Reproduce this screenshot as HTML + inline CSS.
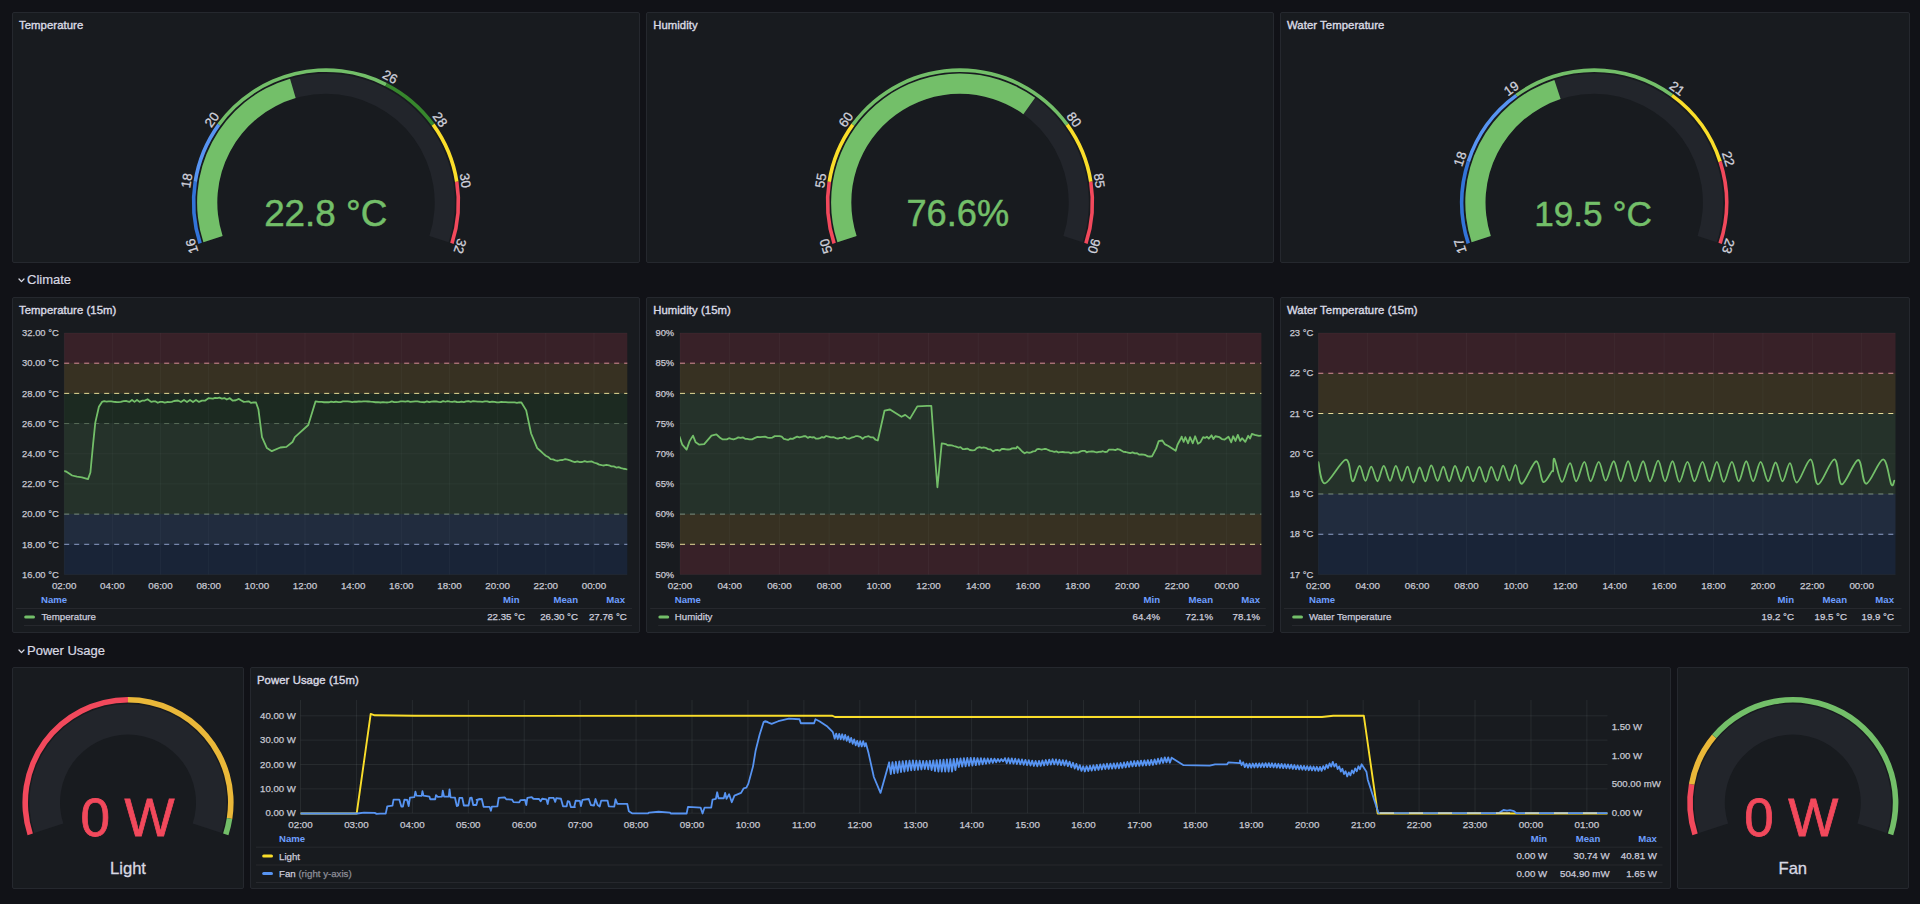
<!DOCTYPE html><html><head><meta charset="utf-8"><style>
*{margin:0;padding:0;box-sizing:border-box}
html,body{width:1920px;height:904px;overflow:hidden;background:#111217;font-family:"Liberation Sans", sans-serif;color:#ccccdc}
.panel{position:absolute;background:#181b1f;border:1px solid #25282e;border-radius:2px}
.ptitle{position:absolute;letter-spacing:0.08px;font-size:11.3px;line-height:15px;-webkit-text-stroke:0.4px #d8d9e3;color:#d8d9e3;white-space:nowrap}
.row{position:absolute;font-size:13px;line-height:16px;-webkit-text-stroke:0.2px #d8d9e3;color:#d8d9e3;white-space:nowrap}
svg{position:absolute;left:0;top:0}
svg text{font-family:"Liberation Sans", sans-serif}
</style></head><body><div class="panel" style="left:12px;top:12px;width:628px;height:251px"></div><div class="ptitle" style="left:19px;top:18px">Temperature</div><div class="panel" style="left:646.2px;top:12px;width:627.6px;height:251px"></div><div class="ptitle" style="left:653.2px;top:18px">Humidity</div><div class="panel" style="left:1280px;top:12px;width:629.5px;height:251px"></div><div class="ptitle" style="left:1287px;top:18px">Water Temperature</div><div class="row" style="left:27px;top:272px">Climate</div><svg style="left:18px;top:278px" width="7" height="5" viewBox="0 0 7 5"><path d="M1,1 L3.5,3.6 L6,1" fill="none" stroke="#d8d9e3" stroke-width="1.3" stroke-linecap="round" stroke-linejoin="round"/></svg><div class="panel" style="left:12px;top:296.5px;width:628px;height:336px"></div><div class="ptitle" style="left:19px;top:302.5px">Temperature (15m)</div><div class="panel" style="left:646.2px;top:296.5px;width:627.6px;height:336px"></div><div class="ptitle" style="left:653.2px;top:302.5px">Humidity (15m)</div><div class="panel" style="left:1280px;top:296.5px;width:629.5px;height:336px"></div><div class="ptitle" style="left:1287px;top:302.5px">Water Temperature (15m)</div><div class="row" style="left:27px;top:643px">Power Usage</div><svg style="left:18px;top:648.5px" width="7" height="5" viewBox="0 0 7 5"><path d="M1,1 L3.5,3.6 L6,1" fill="none" stroke="#d8d9e3" stroke-width="1.3" stroke-linecap="round" stroke-linejoin="round"/></svg><div class="panel" style="left:12px;top:667.4px;width:232px;height:221.6px"></div><div class="panel" style="left:250px;top:667.4px;width:1420.7px;height:221.6px"></div><div class="ptitle" style="left:257px;top:673.4px">Power Usage (15m)</div><div class="panel" style="left:1676.7px;top:667.4px;width:232.8px;height:221.6px"></div><svg width="1920" height="904" viewBox="0 0 1920 904"><path d="M203.41,242.33A128.90,128.90 0 1 1 448.59,242.33L429.38,236.09A108.70,108.70 0 1 0 222.62,236.09Z" fill="#22252b"/><path d="M203.41,242.33A128.90,128.90 0 0 1 290.04,78.72L295.67,98.12A108.70,108.70 0 0 0 222.62,236.09Z" fill="#73BF69"/><path d="M198.37,243.97A134.20,134.20 0 0 1 193.45,181.51L197.01,182.07A130.60,130.60 0 0 0 201.79,242.86Z" fill="#3274D9"/><path d="M193.45,181.51A134.20,134.20 0 0 1 217.43,123.62L220.34,125.74A130.60,130.60 0 0 0 197.01,182.07Z" fill="#5794F2"/><path d="M217.43,123.62A134.20,134.20 0 0 1 386.93,82.93L385.29,86.13A130.60,130.60 0 0 0 220.34,125.74Z" fill="#73BF69"/><path d="M386.93,82.93A134.20,134.20 0 0 1 434.57,123.62L431.66,125.74A130.60,130.60 0 0 0 385.29,86.13Z" fill="#37872D"/><path d="M434.57,123.62A134.20,134.20 0 0 1 458.55,181.51L454.99,182.07A130.60,130.60 0 0 0 431.66,125.74Z" fill="#FADE2A"/><path d="M458.55,181.51A134.20,134.20 0 0 1 453.63,243.97L450.21,242.86A130.60,130.60 0 0 0 454.99,182.07Z" fill="#F2495C"/><text x="0" y="0" transform="translate(191.90,246.07) rotate(252.00)" text-anchor="middle" dominant-baseline="central" font-size="13.2" fill="#d0d1dc" stroke="#d0d1dc" stroke-width="0.3">16</text><text x="0" y="0" transform="translate(186.74,180.44) rotate(279.00)" text-anchor="middle" dominant-baseline="central" font-size="13.2" fill="#d0d1dc" stroke="#d0d1dc" stroke-width="0.3">18</text><text x="0" y="0" transform="translate(211.93,119.62) rotate(306.00)" text-anchor="middle" dominant-baseline="central" font-size="13.2" fill="#d0d1dc" stroke="#d0d1dc" stroke-width="0.3">20</text><text x="0" y="0" transform="translate(390.01,76.87) rotate(387.00)" text-anchor="middle" dominant-baseline="central" font-size="13.2" fill="#d0d1dc" stroke="#d0d1dc" stroke-width="0.3">26</text><text x="0" y="0" transform="translate(440.07,119.62) rotate(414.00)" text-anchor="middle" dominant-baseline="central" font-size="13.2" fill="#d0d1dc" stroke="#d0d1dc" stroke-width="0.3">28</text><text x="0" y="0" transform="translate(465.26,180.44) rotate(441.00)" text-anchor="middle" dominant-baseline="central" font-size="13.2" fill="#d0d1dc" stroke="#d0d1dc" stroke-width="0.3">30</text><text x="0" y="0" transform="translate(460.10,246.07) rotate(468.00)" text-anchor="middle" dominant-baseline="central" font-size="13.2" fill="#d0d1dc" stroke="#d0d1dc" stroke-width="0.3">32</text><text x="325.7" y="225.7" text-anchor="middle" font-size="36.8" fill="#73BF69" stroke="#73BF69" stroke-width="0.5">22.8 °C</text><path d="M837.41,242.33A128.90,128.90 0 1 1 1082.59,242.33L1063.38,236.09A108.70,108.70 0 1 0 856.62,236.09Z" fill="#22252b"/><path d="M837.41,242.33A128.90,128.90 0 0 1 1035.11,97.74L1023.34,114.16A108.70,108.70 0 0 0 856.62,236.09Z" fill="#73BF69"/><path d="M832.37,243.97A134.20,134.20 0 0 1 827.45,181.51L831.01,182.07A130.60,130.60 0 0 0 835.79,242.86Z" fill="#F2495C"/><path d="M827.45,181.51A134.20,134.20 0 0 1 851.43,123.62L854.34,125.74A130.60,130.60 0 0 0 831.01,182.07Z" fill="#FADE2A"/><path d="M851.43,123.62A134.20,134.20 0 0 1 1068.57,123.62L1065.66,125.74A130.60,130.60 0 0 0 854.34,125.74Z" fill="#73BF69"/><path d="M1068.57,123.62A134.20,134.20 0 0 1 1092.55,181.51L1088.99,182.07A130.60,130.60 0 0 0 1065.66,125.74Z" fill="#FADE2A"/><path d="M1092.55,181.51A134.20,134.20 0 0 1 1087.63,243.97L1084.21,242.86A130.60,130.60 0 0 0 1088.99,182.07Z" fill="#F2495C"/><text x="0" y="0" transform="translate(825.90,246.07) rotate(252.00)" text-anchor="middle" dominant-baseline="central" font-size="13.2" fill="#d0d1dc" stroke="#d0d1dc" stroke-width="0.3">50</text><text x="0" y="0" transform="translate(820.74,180.44) rotate(279.00)" text-anchor="middle" dominant-baseline="central" font-size="13.2" fill="#d0d1dc" stroke="#d0d1dc" stroke-width="0.3">55</text><text x="0" y="0" transform="translate(845.93,119.62) rotate(306.00)" text-anchor="middle" dominant-baseline="central" font-size="13.2" fill="#d0d1dc" stroke="#d0d1dc" stroke-width="0.3">60</text><text x="0" y="0" transform="translate(1074.07,119.62) rotate(414.00)" text-anchor="middle" dominant-baseline="central" font-size="13.2" fill="#d0d1dc" stroke="#d0d1dc" stroke-width="0.3">80</text><text x="0" y="0" transform="translate(1099.26,180.44) rotate(441.00)" text-anchor="middle" dominant-baseline="central" font-size="13.2" fill="#d0d1dc" stroke="#d0d1dc" stroke-width="0.3">85</text><text x="0" y="0" transform="translate(1094.10,246.07) rotate(468.00)" text-anchor="middle" dominant-baseline="central" font-size="13.2" fill="#d0d1dc" stroke="#d0d1dc" stroke-width="0.3">90</text><text x="957.8" y="225.7" text-anchor="middle" font-size="36.2" fill="#73BF69" stroke="#73BF69" stroke-width="0.5">76.6%</text><path d="M1471.61,242.33A128.90,128.90 0 1 1 1716.79,242.33L1697.58,236.09A108.70,108.70 0 1 0 1490.82,236.09Z" fill="#22252b"/><path d="M1471.61,242.33A128.90,128.90 0 0 1 1554.37,79.91L1560.61,99.12A108.70,108.70 0 0 0 1490.82,236.09Z" fill="#73BF69"/><path d="M1466.57,243.97A134.20,134.20 0 0 1 1466.57,161.03L1469.99,162.14A130.60,130.60 0 0 0 1469.99,242.86Z" fill="#3274D9"/><path d="M1466.57,161.03A134.20,134.20 0 0 1 1515.32,93.93L1517.44,96.84A130.60,130.60 0 0 0 1469.99,162.14Z" fill="#5794F2"/><path d="M1515.32,93.93A134.20,134.20 0 0 1 1673.08,93.93L1670.96,96.84A130.60,130.60 0 0 0 1517.44,96.84Z" fill="#73BF69"/><path d="M1673.08,93.93A134.20,134.20 0 0 1 1721.83,161.03L1718.41,162.14A130.60,130.60 0 0 0 1670.96,96.84Z" fill="#FADE2A"/><path d="M1721.83,161.03A134.20,134.20 0 0 1 1721.83,243.97L1718.41,242.86A130.60,130.60 0 0 0 1718.41,162.14Z" fill="#F2495C"/><text x="0" y="0" transform="translate(1460.10,246.07) rotate(252.00)" text-anchor="middle" dominant-baseline="central" font-size="13.2" fill="#d0d1dc" stroke="#d0d1dc" stroke-width="0.3">17</text><text x="0" y="0" transform="translate(1460.10,158.93) rotate(288.00)" text-anchor="middle" dominant-baseline="central" font-size="13.2" fill="#d0d1dc" stroke="#d0d1dc" stroke-width="0.3">18</text><text x="0" y="0" transform="translate(1511.32,88.43) rotate(324.00)" text-anchor="middle" dominant-baseline="central" font-size="13.2" fill="#d0d1dc" stroke="#d0d1dc" stroke-width="0.3">19</text><text x="0" y="0" transform="translate(1677.08,88.43) rotate(396.00)" text-anchor="middle" dominant-baseline="central" font-size="13.2" fill="#d0d1dc" stroke="#d0d1dc" stroke-width="0.3">21</text><text x="0" y="0" transform="translate(1728.30,158.93) rotate(432.00)" text-anchor="middle" dominant-baseline="central" font-size="13.2" fill="#d0d1dc" stroke="#d0d1dc" stroke-width="0.3">22</text><text x="0" y="0" transform="translate(1728.30,246.07) rotate(468.00)" text-anchor="middle" dominant-baseline="central" font-size="13.2" fill="#d0d1dc" stroke="#d0d1dc" stroke-width="0.3">23</text><text x="1593.0" y="225.7" text-anchor="middle" font-size="35.2" fill="#73BF69" stroke="#73BF69" stroke-width="0.5">19.5 °C</text><path d="M34.23,833.07A98.60,98.60 0 1 1 221.77,833.07L192.67,823.61A68.00,68.00 0 1 0 63.33,823.61Z" fill="#22252b"/><path d="M27.57,835.23A105.60,105.60 0 0 1 128.00,697.00L128.00,702.60A100.00,100.00 0 0 0 32.89,833.50Z" fill="#F2495C"/><path d="M128.00,697.00A105.60,105.60 0 0 1 232.32,818.99L226.79,818.12A100.00,100.00 0 0 0 128.00,702.60Z" fill="#EAB839"/><path d="M232.32,818.99A105.60,105.60 0 0 1 228.43,835.23L223.11,833.50A100.00,100.00 0 0 0 226.79,818.12Z" fill="#73BF69"/><text x="127.5" y="836" text-anchor="middle" font-size="53" fill="#F2495C" stroke="#F2495C" stroke-width="0.8">0 W</text><path d="M1699.03,833.07A98.60,98.60 0 1 1 1886.57,833.07L1857.47,823.61A68.00,68.00 0 1 0 1728.13,823.61Z" fill="#22252b"/><path d="M1692.37,835.23A105.60,105.60 0 0 1 1688.90,783.73L1694.41,784.73A100.00,100.00 0 0 0 1697.69,833.50Z" fill="#F2495C"/><path d="M1688.90,783.73A105.60,105.60 0 0 1 1712.03,734.57L1716.31,738.18A100.00,100.00 0 0 0 1694.41,784.73Z" fill="#EAB839"/><path d="M1712.03,734.57A105.60,105.60 0 0 1 1893.23,835.23L1887.91,833.50A100.00,100.00 0 0 0 1716.31,738.18Z" fill="#73BF69"/><text x="1791.3" y="836" text-anchor="middle" font-size="53" fill="#F2495C" stroke="#F2495C" stroke-width="0.8">0 W</text><text x="128" y="874" text-anchor="middle" font-size="16.6" fill="#d8d9e3" stroke="#d8d9e3" stroke-width="0.3">Light</text><text x="1792.8" y="874" text-anchor="middle" font-size="16.6" fill="#d8d9e3" stroke="#d8d9e3" stroke-width="0.3">Fan</text></svg><svg width="1920" height="904" viewBox="0 0 1920 904"><rect x="64.2" y="544.31" width="563.10" height="30.19" fill="rgba(31,96,196,0.15)"/><rect x="64.2" y="514.12" width="563.10" height="30.19" fill="rgba(87,148,242,0.15)"/><rect x="64.2" y="423.56" width="563.10" height="90.56" fill="rgba(115,191,105,0.15)"/><rect x="64.2" y="393.38" width="563.10" height="30.19" fill="rgba(55,135,45,0.15)"/><rect x="64.2" y="363.19" width="563.10" height="30.19" fill="rgba(234,184,57,0.15)"/><rect x="64.2" y="333.00" width="563.10" height="30.19" fill="rgba(242,73,92,0.15)"/><line x1="64.2" x2="627.3" y1="333.00" y2="333.00" stroke="rgba(240,250,255,0.035)" stroke-width="1"/><line x1="64.2" x2="627.3" y1="363.19" y2="363.19" stroke="rgba(240,250,255,0.035)" stroke-width="1"/><line x1="64.2" x2="627.3" y1="393.38" y2="393.38" stroke="rgba(240,250,255,0.035)" stroke-width="1"/><line x1="64.2" x2="627.3" y1="423.56" y2="423.56" stroke="rgba(240,250,255,0.035)" stroke-width="1"/><line x1="64.2" x2="627.3" y1="453.75" y2="453.75" stroke="rgba(240,250,255,0.035)" stroke-width="1"/><line x1="64.2" x2="627.3" y1="483.94" y2="483.94" stroke="rgba(240,250,255,0.035)" stroke-width="1"/><line x1="64.2" x2="627.3" y1="514.12" y2="514.12" stroke="rgba(240,250,255,0.035)" stroke-width="1"/><line x1="64.2" x2="627.3" y1="544.31" y2="544.31" stroke="rgba(240,250,255,0.035)" stroke-width="1"/><line x1="64.2" x2="627.3" y1="574.50" y2="574.50" stroke="rgba(240,250,255,0.035)" stroke-width="1"/><line x1="64.20" x2="64.20" y1="333" y2="574.5" stroke="rgba(240,250,255,0.035)" stroke-width="1"/><line x1="112.36" x2="112.36" y1="333" y2="574.5" stroke="rgba(240,250,255,0.035)" stroke-width="1"/><line x1="160.52" x2="160.52" y1="333" y2="574.5" stroke="rgba(240,250,255,0.035)" stroke-width="1"/><line x1="208.68" x2="208.68" y1="333" y2="574.5" stroke="rgba(240,250,255,0.035)" stroke-width="1"/><line x1="256.84" x2="256.84" y1="333" y2="574.5" stroke="rgba(240,250,255,0.035)" stroke-width="1"/><line x1="305.00" x2="305.00" y1="333" y2="574.5" stroke="rgba(240,250,255,0.035)" stroke-width="1"/><line x1="353.16" x2="353.16" y1="333" y2="574.5" stroke="rgba(240,250,255,0.035)" stroke-width="1"/><line x1="401.32" x2="401.32" y1="333" y2="574.5" stroke="rgba(240,250,255,0.035)" stroke-width="1"/><line x1="449.48" x2="449.48" y1="333" y2="574.5" stroke="rgba(240,250,255,0.035)" stroke-width="1"/><line x1="497.64" x2="497.64" y1="333" y2="574.5" stroke="rgba(240,250,255,0.035)" stroke-width="1"/><line x1="545.80" x2="545.80" y1="333" y2="574.5" stroke="rgba(240,250,255,0.035)" stroke-width="1"/><line x1="593.96" x2="593.96" y1="333" y2="574.5" stroke="rgba(240,250,255,0.035)" stroke-width="1"/><line x1="64.2" x2="627.3" y1="544.31" y2="544.31" stroke="rgb(140,158,200)" stroke-width="1" stroke-dasharray="5 5"/><line x1="64.2" x2="627.3" y1="514.12" y2="514.12" stroke="rgb(120,140,125)" stroke-width="1" stroke-dasharray="5 5"/><line x1="64.2" x2="627.3" y1="423.56" y2="423.56" stroke="rgb(88,108,88)" stroke-width="1" stroke-dasharray="5 5"/><line x1="64.2" x2="627.3" y1="393.38" y2="393.38" stroke="rgb(228,218,150)" stroke-width="1" stroke-dasharray="5 5"/><line x1="64.2" x2="627.3" y1="363.19" y2="363.19" stroke="rgb(215,140,150)" stroke-width="1" stroke-dasharray="5 5"/><text x="58.7" y="336.20" text-anchor="end" font-size="9.4" fill="#c7c8d2" stroke="#c7c8d2" stroke-width="0.25">32.00 °C</text><text x="58.7" y="366.39" text-anchor="end" font-size="9.4" fill="#c7c8d2" stroke="#c7c8d2" stroke-width="0.25">30.00 °C</text><text x="58.7" y="396.57" text-anchor="end" font-size="9.4" fill="#c7c8d2" stroke="#c7c8d2" stroke-width="0.25">28.00 °C</text><text x="58.7" y="426.76" text-anchor="end" font-size="9.4" fill="#c7c8d2" stroke="#c7c8d2" stroke-width="0.25">26.00 °C</text><text x="58.7" y="456.95" text-anchor="end" font-size="9.4" fill="#c7c8d2" stroke="#c7c8d2" stroke-width="0.25">24.00 °C</text><text x="58.7" y="487.14" text-anchor="end" font-size="9.4" fill="#c7c8d2" stroke="#c7c8d2" stroke-width="0.25">22.00 °C</text><text x="58.7" y="517.33" text-anchor="end" font-size="9.4" fill="#c7c8d2" stroke="#c7c8d2" stroke-width="0.25">20.00 °C</text><text x="58.7" y="547.51" text-anchor="end" font-size="9.4" fill="#c7c8d2" stroke="#c7c8d2" stroke-width="0.25">18.00 °C</text><text x="58.7" y="577.70" text-anchor="end" font-size="9.4" fill="#c7c8d2" stroke="#c7c8d2" stroke-width="0.25">16.00 °C</text><text x="64.20" y="588.60" text-anchor="middle" font-size="9.8" fill="#c7c8d2" stroke="#c7c8d2" stroke-width="0.25">02:00</text><text x="112.36" y="588.60" text-anchor="middle" font-size="9.8" fill="#c7c8d2" stroke="#c7c8d2" stroke-width="0.25">04:00</text><text x="160.52" y="588.60" text-anchor="middle" font-size="9.8" fill="#c7c8d2" stroke="#c7c8d2" stroke-width="0.25">06:00</text><text x="208.68" y="588.60" text-anchor="middle" font-size="9.8" fill="#c7c8d2" stroke="#c7c8d2" stroke-width="0.25">08:00</text><text x="256.84" y="588.60" text-anchor="middle" font-size="9.8" fill="#c7c8d2" stroke="#c7c8d2" stroke-width="0.25">10:00</text><text x="305.00" y="588.60" text-anchor="middle" font-size="9.8" fill="#c7c8d2" stroke="#c7c8d2" stroke-width="0.25">12:00</text><text x="353.16" y="588.60" text-anchor="middle" font-size="9.8" fill="#c7c8d2" stroke="#c7c8d2" stroke-width="0.25">14:00</text><text x="401.32" y="588.60" text-anchor="middle" font-size="9.8" fill="#c7c8d2" stroke="#c7c8d2" stroke-width="0.25">16:00</text><text x="449.48" y="588.60" text-anchor="middle" font-size="9.8" fill="#c7c8d2" stroke="#c7c8d2" stroke-width="0.25">18:00</text><text x="497.64" y="588.60" text-anchor="middle" font-size="9.8" fill="#c7c8d2" stroke="#c7c8d2" stroke-width="0.25">20:00</text><text x="545.80" y="588.60" text-anchor="middle" font-size="9.8" fill="#c7c8d2" stroke="#c7c8d2" stroke-width="0.25">22:00</text><text x="593.96" y="588.60" text-anchor="middle" font-size="9.8" fill="#c7c8d2" stroke="#c7c8d2" stroke-width="0.25">00:00</text><svg x="64.2" y="331" width="563.0999999999999" height="245.5" viewBox="64.2 331 563.0999999999999 245.5" overflow="hidden"><path d="M64.20,471.20 L66.10,471.50 L72.20,475.50 L77.00,476.70 L81.90,477.30 L88.00,479.10 L90.40,472.50 L93.00,445.00 L95.30,422.60 L98.90,406.80 L102.00,401.90 L104.23,401.23 L106.47,401.58 L108.70,401.30 L111.35,401.32 L114.00,401.80 L116.27,402.02 L118.53,402.09 L120.80,401.90 L123.63,401.12 L126.47,401.02 L129.30,401.90 L132.00,400.00 L134.50,401.90 L137.00,400.00 L139.50,401.90 L142.00,400.70 L144.80,400.56 L147.60,399.20 L151.20,401.90 L153.40,401.47 L155.60,401.42 L157.80,402.79 L160.00,401.90 L162.38,401.90 L164.75,402.61 L167.12,402.01 L169.50,402.10 L171.75,401.80 L174.00,401.00 L178.00,400.50 L181.00,402.00 L184.00,400.00 L187.00,402.00 L190.00,400.00 L193.00,402.00 L196.00,400.00 L199.00,401.90 L201.95,400.67 L204.90,400.70 L208.50,398.20 L210.70,398.32 L212.90,398.62 L215.10,397.88 L217.30,398.15 L219.50,397.60 L221.93,398.54 L224.37,398.08 L226.80,399.50 L229.80,398.20 L232.80,400.70 L235.85,400.26 L238.90,398.90 L241.35,400.56 L243.80,401.90 L246.24,401.66 L248.68,401.30 L251.12,402.92 L253.56,402.33 L256.00,402.50 L258.40,409.20 L262.00,437.20 L266.90,448.10 L271.80,451.20 L280.30,447.50 L286.40,446.90 L292.50,442.00 L294.90,437.20 L308.30,425.00 L315.60,401.30 L318.65,401.82 L321.70,401.90 L324.06,402.26 L326.42,402.08 L328.77,402.27 L331.13,401.73 L333.49,402.12 L335.85,401.74 L338.21,402.22 L340.57,402.15 L342.93,401.35 L345.28,401.37 L347.64,401.43 L350.00,401.70 L352.25,402.14 L354.50,401.59 L356.75,401.75 L359.00,401.40 L361.25,401.58 L363.50,401.44 L365.75,401.38 L368.00,401.50 L370.50,401.70 L373.00,401.82 L375.50,402.25 L378.00,402.15 L380.50,402.51 L383.00,402.20 L385.22,402.46 L387.44,402.49 L389.67,402.07 L391.89,401.46 L394.11,402.06 L396.33,402.06 L398.56,401.90 L400.78,401.47 L403.00,401.30 L405.43,401.59 L407.86,401.15 L410.29,401.85 L412.71,401.66 L415.14,401.44 L417.57,401.29 L420.00,401.80 L422.31,402.14 L424.62,402.26 L426.92,401.34 L429.23,402.04 L431.54,401.63 L433.85,401.36 L436.15,401.49 L438.46,401.95 L440.77,402.03 L443.08,401.19 L445.38,401.75 L447.69,401.16 L450.00,401.60 L452.31,401.83 L454.62,401.45 L456.92,402.00 L459.23,402.11 L461.54,401.64 L463.85,402.14 L466.15,401.46 L468.46,401.24 L470.77,401.77 L473.08,401.21 L475.38,401.38 L477.69,401.60 L480.00,401.70 L482.43,401.84 L484.87,401.42 L487.30,401.34 L489.73,402.20 L492.17,401.68 L494.60,401.90 L496.83,402.41 L499.07,402.40 L501.30,401.93 L503.53,402.06 L505.77,402.17 L508.00,402.34 L510.23,402.35 L512.47,402.36 L514.70,402.47 L516.93,402.84 L519.17,402.46 L521.40,402.50 L526.20,410.40 L531.10,433.50 L537.20,448.10 L540.25,450.77 L543.30,453.60 L545.73,455.70 L548.17,456.95 L550.60,459.10 L553.00,459.46 L555.40,460.30 L557.84,460.75 L560.28,460.09 L562.72,460.00 L565.16,459.23 L567.60,459.70 L570.03,460.40 L572.47,461.40 L574.90,462.10 L577.33,461.44 L579.76,462.07 L582.19,462.00 L584.61,461.23 L587.04,461.82 L589.47,461.55 L591.90,461.50 L594.33,462.75 L596.77,463.39 L599.20,464.60 L601.63,465.15 L604.07,465.49 L606.50,464.93 L608.93,465.27 L611.37,466.31 L613.80,466.40 L616.24,467.52 L618.68,467.22 L621.12,468.03 L623.56,468.75 L626.00,469.20 L627.30,469.40" fill="none" stroke="#73BF69" stroke-width="1.8" stroke-linejoin="round" stroke-linecap="round" /></svg><rect x="680" y="544.31" width="581.40" height="30.19" fill="rgba(242,73,92,0.15)"/><rect x="680" y="514.12" width="581.40" height="30.19" fill="rgba(234,184,57,0.15)"/><rect x="680" y="393.38" width="581.40" height="120.75" fill="rgba(115,191,105,0.15)"/><rect x="680" y="363.19" width="581.40" height="30.19" fill="rgba(234,184,57,0.15)"/><rect x="680" y="333.00" width="581.40" height="30.19" fill="rgba(242,73,92,0.15)"/><line x1="680" x2="1261.4" y1="333.00" y2="333.00" stroke="rgba(240,250,255,0.035)" stroke-width="1"/><line x1="680" x2="1261.4" y1="363.19" y2="363.19" stroke="rgba(240,250,255,0.035)" stroke-width="1"/><line x1="680" x2="1261.4" y1="393.38" y2="393.38" stroke="rgba(240,250,255,0.035)" stroke-width="1"/><line x1="680" x2="1261.4" y1="423.56" y2="423.56" stroke="rgba(240,250,255,0.035)" stroke-width="1"/><line x1="680" x2="1261.4" y1="453.75" y2="453.75" stroke="rgba(240,250,255,0.035)" stroke-width="1"/><line x1="680" x2="1261.4" y1="483.94" y2="483.94" stroke="rgba(240,250,255,0.035)" stroke-width="1"/><line x1="680" x2="1261.4" y1="514.12" y2="514.12" stroke="rgba(240,250,255,0.035)" stroke-width="1"/><line x1="680" x2="1261.4" y1="544.31" y2="544.31" stroke="rgba(240,250,255,0.035)" stroke-width="1"/><line x1="680" x2="1261.4" y1="574.50" y2="574.50" stroke="rgba(240,250,255,0.035)" stroke-width="1"/><line x1="680.00" x2="680.00" y1="333" y2="574.5" stroke="rgba(240,250,255,0.035)" stroke-width="1"/><line x1="729.70" x2="729.70" y1="333" y2="574.5" stroke="rgba(240,250,255,0.035)" stroke-width="1"/><line x1="779.40" x2="779.40" y1="333" y2="574.5" stroke="rgba(240,250,255,0.035)" stroke-width="1"/><line x1="829.10" x2="829.10" y1="333" y2="574.5" stroke="rgba(240,250,255,0.035)" stroke-width="1"/><line x1="878.80" x2="878.80" y1="333" y2="574.5" stroke="rgba(240,250,255,0.035)" stroke-width="1"/><line x1="928.50" x2="928.50" y1="333" y2="574.5" stroke="rgba(240,250,255,0.035)" stroke-width="1"/><line x1="978.20" x2="978.20" y1="333" y2="574.5" stroke="rgba(240,250,255,0.035)" stroke-width="1"/><line x1="1027.90" x2="1027.90" y1="333" y2="574.5" stroke="rgba(240,250,255,0.035)" stroke-width="1"/><line x1="1077.60" x2="1077.60" y1="333" y2="574.5" stroke="rgba(240,250,255,0.035)" stroke-width="1"/><line x1="1127.30" x2="1127.30" y1="333" y2="574.5" stroke="rgba(240,250,255,0.035)" stroke-width="1"/><line x1="1177.00" x2="1177.00" y1="333" y2="574.5" stroke="rgba(240,250,255,0.035)" stroke-width="1"/><line x1="1226.70" x2="1226.70" y1="333" y2="574.5" stroke="rgba(240,250,255,0.035)" stroke-width="1"/><line x1="680" x2="1261.4" y1="544.31" y2="544.31" stroke="rgb(228,218,150)" stroke-width="1" stroke-dasharray="5 5"/><line x1="680" x2="1261.4" y1="514.12" y2="514.12" stroke="rgb(120,140,125)" stroke-width="1" stroke-dasharray="5 5"/><line x1="680" x2="1261.4" y1="393.38" y2="393.38" stroke="rgb(228,218,150)" stroke-width="1" stroke-dasharray="5 5"/><line x1="680" x2="1261.4" y1="363.19" y2="363.19" stroke="rgb(215,140,150)" stroke-width="1" stroke-dasharray="5 5"/><text x="674.2" y="336.20" text-anchor="end" font-size="9.4" fill="#c7c8d2" stroke="#c7c8d2" stroke-width="0.25">90%</text><text x="674.2" y="366.39" text-anchor="end" font-size="9.4" fill="#c7c8d2" stroke="#c7c8d2" stroke-width="0.25">85%</text><text x="674.2" y="396.57" text-anchor="end" font-size="9.4" fill="#c7c8d2" stroke="#c7c8d2" stroke-width="0.25">80%</text><text x="674.2" y="426.76" text-anchor="end" font-size="9.4" fill="#c7c8d2" stroke="#c7c8d2" stroke-width="0.25">75%</text><text x="674.2" y="456.95" text-anchor="end" font-size="9.4" fill="#c7c8d2" stroke="#c7c8d2" stroke-width="0.25">70%</text><text x="674.2" y="487.14" text-anchor="end" font-size="9.4" fill="#c7c8d2" stroke="#c7c8d2" stroke-width="0.25">65%</text><text x="674.2" y="517.33" text-anchor="end" font-size="9.4" fill="#c7c8d2" stroke="#c7c8d2" stroke-width="0.25">60%</text><text x="674.2" y="547.51" text-anchor="end" font-size="9.4" fill="#c7c8d2" stroke="#c7c8d2" stroke-width="0.25">55%</text><text x="674.2" y="577.70" text-anchor="end" font-size="9.4" fill="#c7c8d2" stroke="#c7c8d2" stroke-width="0.25">50%</text><text x="680.00" y="588.60" text-anchor="middle" font-size="9.8" fill="#c7c8d2" stroke="#c7c8d2" stroke-width="0.25">02:00</text><text x="729.70" y="588.60" text-anchor="middle" font-size="9.8" fill="#c7c8d2" stroke="#c7c8d2" stroke-width="0.25">04:00</text><text x="779.40" y="588.60" text-anchor="middle" font-size="9.8" fill="#c7c8d2" stroke="#c7c8d2" stroke-width="0.25">06:00</text><text x="829.10" y="588.60" text-anchor="middle" font-size="9.8" fill="#c7c8d2" stroke="#c7c8d2" stroke-width="0.25">08:00</text><text x="878.80" y="588.60" text-anchor="middle" font-size="9.8" fill="#c7c8d2" stroke="#c7c8d2" stroke-width="0.25">10:00</text><text x="928.50" y="588.60" text-anchor="middle" font-size="9.8" fill="#c7c8d2" stroke="#c7c8d2" stroke-width="0.25">12:00</text><text x="978.20" y="588.60" text-anchor="middle" font-size="9.8" fill="#c7c8d2" stroke="#c7c8d2" stroke-width="0.25">14:00</text><text x="1027.90" y="588.60" text-anchor="middle" font-size="9.8" fill="#c7c8d2" stroke="#c7c8d2" stroke-width="0.25">16:00</text><text x="1077.60" y="588.60" text-anchor="middle" font-size="9.8" fill="#c7c8d2" stroke="#c7c8d2" stroke-width="0.25">18:00</text><text x="1127.30" y="588.60" text-anchor="middle" font-size="9.8" fill="#c7c8d2" stroke="#c7c8d2" stroke-width="0.25">20:00</text><text x="1177.00" y="588.60" text-anchor="middle" font-size="9.8" fill="#c7c8d2" stroke="#c7c8d2" stroke-width="0.25">22:00</text><text x="1226.70" y="588.60" text-anchor="middle" font-size="9.8" fill="#c7c8d2" stroke="#c7c8d2" stroke-width="0.25">00:00</text><svg x="680" y="331" width="581.4000000000001" height="245.5" viewBox="680 331 581.4000000000001 245.5" overflow="hidden"><path d="M679.60,436.80 L682.30,444.70 L686.60,449.60 L689.60,441.10 L693.00,435.60 L695.70,442.30 L699.30,444.70 L704.20,444.10 L711.50,435.60 L716.40,434.40 L718.40,436.25 L720.40,438.10 L722.40,439.30 L724.60,439.46 L726.80,439.36 L729.00,438.20 L731.27,438.80 L733.53,439.29 L735.80,438.70 L738.23,437.42 L740.67,437.77 L743.10,437.40 L745.13,438.83 L747.17,438.93 L749.20,439.30 L752.10,439.32 L755.00,437.90 L757.53,436.84 L760.07,437.11 L762.60,436.80 L765.07,436.68 L767.53,437.55 L770.00,437.80 L772.40,437.53 L774.80,436.12 L777.20,436.09 L779.60,436.20 L781.73,436.73 L783.85,438.80 L785.98,439.45 L788.10,439.90 L790.40,438.52 L792.70,438.90 L795.00,437.60 L797.17,436.68 L799.33,437.28 L801.50,436.80 L803.60,436.27 L805.70,436.18 L807.80,437.89 L809.90,436.84 L812.00,437.50 L814.00,437.14 L816.00,438.67 L818.00,438.62 L820.00,438.10 L822.03,437.02 L824.07,437.53 L826.10,436.00 L828.52,436.60 L830.95,437.37 L833.38,437.04 L835.80,438.10 L837.92,438.57 L840.05,437.79 L842.17,437.96 L844.30,436.80 L846.75,438.46 L849.20,438.70 L851.33,437.71 L853.45,437.20 L855.58,436.22 L857.70,436.20 L860.15,436.81 L862.60,438.70 L864.63,437.08 L866.67,436.68 L868.70,436.20 L870.98,437.46 L873.25,437.46 L875.52,439.75 L877.80,440.50 L884.50,410.70 L890.00,409.50 L901.50,416.80 L905.20,414.90 L910.00,418.60 L917.30,406.40 L927.00,405.80 L931.30,405.80 L933.70,438.70 L937.40,487.30 L941.70,443.50 L943.72,443.66 L945.73,444.03 L947.75,445.26 L949.77,445.14 L951.78,445.29 L953.80,446.00 L956.04,446.57 L958.28,447.53 L960.52,447.09 L962.76,449.16 L965.00,449.00 L967.42,448.54 L969.85,450.00 L972.28,450.45 L974.70,450.20 L977.15,447.93 L979.60,447.20 L981.63,447.86 L983.67,447.39 L985.70,447.80 L988.13,449.13 L990.57,449.41 L993.00,451.40 L995.18,450.19 L997.36,449.93 L999.54,450.69 L1001.72,448.99 L1003.90,449.00 L1005.93,449.31 L1007.97,449.49 L1010.00,449.41 L1012.03,448.35 L1014.07,448.27 L1016.10,448.40 L1017.30,446.60 L1019.73,448.87 L1022.17,451.51 L1024.60,453.30 L1026.72,452.20 L1028.85,452.75 L1030.97,452.35 L1033.10,451.40 L1035.13,451.18 L1037.17,449.06 L1039.20,449.00 L1041.65,449.71 L1044.10,449.00 L1046.13,448.95 L1048.17,449.95 L1050.20,450.80 L1052.26,451.23 L1054.32,451.97 L1056.38,451.29 L1058.44,452.48 L1060.50,452.12 L1062.56,452.00 L1064.62,452.26 L1066.68,452.28 L1068.74,452.38 L1070.80,453.30 L1073.25,452.26 L1075.70,452.65 L1078.15,452.67 L1080.60,451.40 L1082.62,450.91 L1084.65,450.78 L1086.67,452.33 L1088.70,451.65 L1090.72,451.50 L1092.75,451.28 L1094.78,451.90 L1096.80,452.32 L1098.83,451.78 L1100.85,451.77 L1102.88,451.24 L1104.90,452.00 L1106.93,451.87 L1108.97,449.65 L1111.00,449.60 L1113.17,449.59 L1115.35,450.14 L1117.53,449.01 L1119.70,449.60 L1121.73,450.77 L1123.77,451.92 L1125.80,452.00 L1128.06,452.57 L1130.31,453.18 L1132.57,452.44 L1134.83,453.32 L1137.09,453.22 L1139.34,454.69 L1141.60,454.50 L1143.68,454.53 L1145.76,455.15 L1147.84,456.38 L1149.92,456.50 L1152.00,456.30 L1156.20,448.40 L1158.70,441.10 L1162.30,440.50 L1164.70,444.10 L1168.40,446.00 L1175.70,450.80 L1177.50,444.70 L1181.80,436.80 L1181.56,436.72 L1183.67,441.88 L1185.31,437.19 L1188.13,443.28 L1190.00,437.19 L1192.82,443.28 L1195.16,436.25 L1197.97,443.75 L1200.32,442.35 L1203.13,437.19 L1205.00,437.89 L1206.88,436.72 L1208.76,438.60 L1211.57,435.31 L1213.44,439.06 L1215.32,436.25 L1219.54,437.19 L1221.88,439.06 L1224.70,439.53 L1228.45,436.72 L1231.26,442.35 L1233.13,436.25 L1235.48,440.94 L1237.82,434.85 L1240.17,440.94 L1242.04,438.13 L1245.32,441.88 L1248.14,435.78 L1250.01,438.60 L1251.89,433.91 L1254.70,434.85 L1258.92,435.78 L1261.40,435.60" fill="none" stroke="#73BF69" stroke-width="1.8" stroke-linejoin="round" stroke-linecap="round" /></svg><rect x="1318.3" y="534.25" width="577.20" height="40.25" fill="rgba(31,96,196,0.15)"/><rect x="1318.3" y="494.00" width="577.20" height="40.25" fill="rgba(87,148,242,0.15)"/><rect x="1318.3" y="413.50" width="577.20" height="80.50" fill="rgba(115,191,105,0.15)"/><rect x="1318.3" y="373.25" width="577.20" height="40.25" fill="rgba(234,184,57,0.15)"/><rect x="1318.3" y="333.00" width="577.20" height="40.25" fill="rgba(242,73,92,0.15)"/><line x1="1318.3" x2="1895.5" y1="333.00" y2="333.00" stroke="rgba(240,250,255,0.035)" stroke-width="1"/><line x1="1318.3" x2="1895.5" y1="373.25" y2="373.25" stroke="rgba(240,250,255,0.035)" stroke-width="1"/><line x1="1318.3" x2="1895.5" y1="413.50" y2="413.50" stroke="rgba(240,250,255,0.035)" stroke-width="1"/><line x1="1318.3" x2="1895.5" y1="453.75" y2="453.75" stroke="rgba(240,250,255,0.035)" stroke-width="1"/><line x1="1318.3" x2="1895.5" y1="494.00" y2="494.00" stroke="rgba(240,250,255,0.035)" stroke-width="1"/><line x1="1318.3" x2="1895.5" y1="534.25" y2="534.25" stroke="rgba(240,250,255,0.035)" stroke-width="1"/><line x1="1318.3" x2="1895.5" y1="574.50" y2="574.50" stroke="rgba(240,250,255,0.035)" stroke-width="1"/><line x1="1318.30" x2="1318.30" y1="333" y2="574.5" stroke="rgba(240,250,255,0.035)" stroke-width="1"/><line x1="1367.70" x2="1367.70" y1="333" y2="574.5" stroke="rgba(240,250,255,0.035)" stroke-width="1"/><line x1="1417.10" x2="1417.10" y1="333" y2="574.5" stroke="rgba(240,250,255,0.035)" stroke-width="1"/><line x1="1466.50" x2="1466.50" y1="333" y2="574.5" stroke="rgba(240,250,255,0.035)" stroke-width="1"/><line x1="1515.90" x2="1515.90" y1="333" y2="574.5" stroke="rgba(240,250,255,0.035)" stroke-width="1"/><line x1="1565.30" x2="1565.30" y1="333" y2="574.5" stroke="rgba(240,250,255,0.035)" stroke-width="1"/><line x1="1614.70" x2="1614.70" y1="333" y2="574.5" stroke="rgba(240,250,255,0.035)" stroke-width="1"/><line x1="1664.10" x2="1664.10" y1="333" y2="574.5" stroke="rgba(240,250,255,0.035)" stroke-width="1"/><line x1="1713.50" x2="1713.50" y1="333" y2="574.5" stroke="rgba(240,250,255,0.035)" stroke-width="1"/><line x1="1762.90" x2="1762.90" y1="333" y2="574.5" stroke="rgba(240,250,255,0.035)" stroke-width="1"/><line x1="1812.30" x2="1812.30" y1="333" y2="574.5" stroke="rgba(240,250,255,0.035)" stroke-width="1"/><line x1="1861.70" x2="1861.70" y1="333" y2="574.5" stroke="rgba(240,250,255,0.035)" stroke-width="1"/><line x1="1318.3" x2="1895.5" y1="534.25" y2="534.25" stroke="rgb(140,158,200)" stroke-width="1" stroke-dasharray="5 5"/><line x1="1318.3" x2="1895.5" y1="494.00" y2="494.00" stroke="rgb(120,140,125)" stroke-width="1" stroke-dasharray="5 5"/><line x1="1318.3" x2="1895.5" y1="413.50" y2="413.50" stroke="rgb(228,218,150)" stroke-width="1" stroke-dasharray="5 5"/><line x1="1318.3" x2="1895.5" y1="373.25" y2="373.25" stroke="rgb(215,140,150)" stroke-width="1" stroke-dasharray="5 5"/><text x="1313.2" y="336.20" text-anchor="end" font-size="9.4" fill="#c7c8d2" stroke="#c7c8d2" stroke-width="0.25">23 °C</text><text x="1313.2" y="376.45" text-anchor="end" font-size="9.4" fill="#c7c8d2" stroke="#c7c8d2" stroke-width="0.25">22 °C</text><text x="1313.2" y="416.70" text-anchor="end" font-size="9.4" fill="#c7c8d2" stroke="#c7c8d2" stroke-width="0.25">21 °C</text><text x="1313.2" y="456.95" text-anchor="end" font-size="9.4" fill="#c7c8d2" stroke="#c7c8d2" stroke-width="0.25">20 °C</text><text x="1313.2" y="497.20" text-anchor="end" font-size="9.4" fill="#c7c8d2" stroke="#c7c8d2" stroke-width="0.25">19 °C</text><text x="1313.2" y="537.45" text-anchor="end" font-size="9.4" fill="#c7c8d2" stroke="#c7c8d2" stroke-width="0.25">18 °C</text><text x="1313.2" y="577.70" text-anchor="end" font-size="9.4" fill="#c7c8d2" stroke="#c7c8d2" stroke-width="0.25">17 °C</text><text x="1318.30" y="588.60" text-anchor="middle" font-size="9.8" fill="#c7c8d2" stroke="#c7c8d2" stroke-width="0.25">02:00</text><text x="1367.70" y="588.60" text-anchor="middle" font-size="9.8" fill="#c7c8d2" stroke="#c7c8d2" stroke-width="0.25">04:00</text><text x="1417.10" y="588.60" text-anchor="middle" font-size="9.8" fill="#c7c8d2" stroke="#c7c8d2" stroke-width="0.25">06:00</text><text x="1466.50" y="588.60" text-anchor="middle" font-size="9.8" fill="#c7c8d2" stroke="#c7c8d2" stroke-width="0.25">08:00</text><text x="1515.90" y="588.60" text-anchor="middle" font-size="9.8" fill="#c7c8d2" stroke="#c7c8d2" stroke-width="0.25">10:00</text><text x="1565.30" y="588.60" text-anchor="middle" font-size="9.8" fill="#c7c8d2" stroke="#c7c8d2" stroke-width="0.25">12:00</text><text x="1614.70" y="588.60" text-anchor="middle" font-size="9.8" fill="#c7c8d2" stroke="#c7c8d2" stroke-width="0.25">14:00</text><text x="1664.10" y="588.60" text-anchor="middle" font-size="9.8" fill="#c7c8d2" stroke="#c7c8d2" stroke-width="0.25">16:00</text><text x="1713.50" y="588.60" text-anchor="middle" font-size="9.8" fill="#c7c8d2" stroke="#c7c8d2" stroke-width="0.25">18:00</text><text x="1762.90" y="588.60" text-anchor="middle" font-size="9.8" fill="#c7c8d2" stroke="#c7c8d2" stroke-width="0.25">20:00</text><text x="1812.30" y="588.60" text-anchor="middle" font-size="9.8" fill="#c7c8d2" stroke="#c7c8d2" stroke-width="0.25">22:00</text><text x="1861.70" y="588.60" text-anchor="middle" font-size="9.8" fill="#c7c8d2" stroke="#c7c8d2" stroke-width="0.25">00:00</text><svg x="1318.3" y="331" width="577.2" height="245.5" viewBox="1318.3 331 577.2 245.5" overflow="hidden"><path d="M1318.33,462.08 C1319.44,465.62 1320.42,483.75 1325.00,483.33 C1329.58,482.92 1341.25,459.93 1345.83,459.58 C1350.42,459.24 1350.21,480.21 1352.50,481.25 C1354.79,482.29 1357.43,465.90 1359.58,465.83 C1361.74,465.76 1363.47,480.69 1365.42,480.83 C1367.36,480.97 1369.24,466.60 1371.25,466.67 C1373.26,466.74 1375.42,481.39 1377.50,481.25 C1379.58,481.11 1381.67,465.90 1383.75,465.83 C1385.83,465.76 1387.99,480.83 1390.00,480.83 C1392.01,480.83 1393.89,465.83 1395.83,465.83 C1397.78,465.83 1399.72,480.69 1401.67,480.83 C1403.61,480.97 1405.56,466.39 1407.50,466.67 C1409.44,466.94 1411.32,482.36 1413.33,482.50 C1415.35,482.64 1417.57,467.71 1419.58,467.50 C1421.60,467.29 1423.47,481.60 1425.42,481.25 C1427.36,480.90 1429.24,465.49 1431.25,465.42 C1433.26,465.35 1435.49,480.62 1437.50,480.83 C1439.51,481.04 1441.39,466.60 1443.33,466.67 C1445.28,466.74 1447.22,481.39 1449.17,481.25 C1451.11,481.11 1452.99,465.83 1455.00,465.83 C1457.01,465.83 1459.17,481.11 1461.25,481.25 C1463.33,481.39 1465.52,466.67 1467.50,466.67 C1469.48,466.67 1471.15,481.22 1473.12,481.25 C1475.10,481.28 1477.29,466.77 1479.38,466.88 C1481.46,466.98 1483.65,481.88 1485.62,481.88 C1487.60,481.88 1489.27,467.08 1491.25,466.88 C1493.23,466.67 1495.52,480.83 1497.50,480.62 C1499.48,480.42 1501.15,465.62 1503.12,465.62 C1505.10,465.62 1507.29,480.73 1509.38,480.62 C1511.46,480.52 1513.54,464.48 1515.62,465.00 C1517.71,465.52 1518.44,484.38 1521.88,483.75 C1525.31,483.12 1532.71,461.56 1536.25,461.25 C1539.79,460.94 1540.52,480.21 1543.12,481.88 C1545.73,483.54 1550.21,473.12 1551.88,471.25 C1553.54,469.38 1552.71,472.71 1553.12,470.62 C1553.54,468.54 1552.92,456.88 1554.38,458.75 C1555.83,460.62 1559.27,481.15 1561.88,481.88 C1564.48,482.60 1567.60,463.23 1570.00,463.12 C1572.40,463.02 1573.85,481.46 1576.25,481.25 C1578.65,481.04 1581.98,461.88 1584.38,461.88 C1586.77,461.88 1588.23,481.25 1590.62,481.25 C1593.02,481.25 1596.25,461.98 1598.75,461.88 C1601.25,461.77 1603.12,480.73 1605.62,480.62 C1608.12,480.52 1611.25,461.15 1613.75,461.25 C1616.25,461.35 1618.23,481.25 1620.62,481.25 C1623.02,481.25 1625.73,461.25 1628.12,461.25 C1630.52,461.25 1632.50,481.25 1635.00,481.25 C1637.50,481.25 1640.62,461.25 1643.12,461.25 C1645.62,461.25 1647.50,481.35 1650.00,481.25 C1652.50,481.15 1655.62,460.62 1658.12,460.62 C1660.62,460.62 1662.60,481.15 1665.00,481.25 C1667.40,481.35 1670.10,461.15 1672.50,461.25 C1674.90,461.35 1676.88,481.77 1679.38,481.88 C1681.88,481.98 1685.00,461.98 1687.50,461.88 C1690.00,461.77 1691.88,481.25 1694.38,481.25 C1696.88,481.25 1700.00,461.88 1702.50,461.88 C1705.00,461.88 1706.98,481.25 1709.38,481.25 C1711.77,481.25 1714.48,461.77 1716.88,461.88 C1719.27,461.98 1721.25,481.88 1723.75,481.88 C1726.25,481.88 1729.38,461.98 1731.88,461.88 C1734.38,461.77 1736.35,481.35 1738.75,481.25 C1741.15,481.15 1743.85,461.25 1746.25,461.25 C1748.65,461.25 1750.73,481.15 1753.12,481.25 C1755.52,481.35 1758.12,461.88 1760.62,461.88 C1763.12,461.88 1765.62,481.15 1768.12,481.25 C1770.62,481.35 1773.23,462.50 1775.62,462.50 C1778.02,462.50 1780.10,481.15 1782.50,481.25 C1784.90,481.35 1787.60,462.92 1790.00,463.12 C1792.40,463.33 1793.44,483.12 1796.88,482.50 C1800.31,481.88 1807.08,459.06 1810.62,459.38 C1814.17,459.69 1814.17,484.38 1818.12,484.38 C1822.08,484.38 1830.42,459.38 1834.38,459.38 C1838.33,459.38 1837.92,484.27 1841.88,484.38 C1845.83,484.48 1854.06,460.10 1858.12,460.00 C1862.19,459.90 1862.08,483.85 1866.25,483.75 C1870.42,483.65 1878.96,459.27 1883.12,459.38 C1887.29,459.48 1889.38,480.83 1891.25,484.38 C1893.12,487.92 1893.85,481.25 1894.38,480.62" fill="none" stroke="#73BF69" stroke-width="1.8" stroke-linejoin="round" stroke-linecap="round"/></svg><text x="41" y="603.1" font-size="9.6" font-weight="bold" fill="#6e9fff">Name</text><text x="519.5" y="603.1" text-anchor="end" font-size="9.6" font-weight="bold" fill="#6e9fff">Min</text><text x="578" y="603.1" text-anchor="end" font-size="9.6" font-weight="bold" fill="#6e9fff">Mean</text><text x="625" y="603.1" text-anchor="end" font-size="9.6" font-weight="bold" fill="#6e9fff">Max</text><line x1="16" x2="632" y1="608.5" y2="608.5" stroke="rgba(204,204,220,0.08)" stroke-width="1"/><line x1="24" x2="632" y1="625.5" y2="625.5" stroke="rgba(204,204,220,0.08)" stroke-width="1"/><rect x="24.2" y="615.6" width="10.8" height="3" rx="1.5" fill="#73BF69"/><text x="41.5" y="619.8" font-size="9.7" fill="#ccccdc" stroke="#ccccdc" stroke-width="0.25">Temperature</text><text x="525" y="619.8" text-anchor="end" font-size="9.7" fill="#ccccdc" stroke="#ccccdc" stroke-width="0.25">22.35 °C</text><text x="578" y="619.8" text-anchor="end" font-size="9.7" fill="#ccccdc" stroke="#ccccdc" stroke-width="0.25">26.30 °C</text><text x="626.8" y="619.8" text-anchor="end" font-size="9.7" fill="#ccccdc" stroke="#ccccdc" stroke-width="0.25">27.76 °C</text><text x="674.75" y="603.1" font-size="9.6" font-weight="bold" fill="#6e9fff">Name</text><text x="1160" y="603.1" text-anchor="end" font-size="9.6" font-weight="bold" fill="#6e9fff">Min</text><text x="1213" y="603.1" text-anchor="end" font-size="9.6" font-weight="bold" fill="#6e9fff">Mean</text><text x="1260" y="603.1" text-anchor="end" font-size="9.6" font-weight="bold" fill="#6e9fff">Max</text><line x1="650.2" x2="1265.8000000000002" y1="608.5" y2="608.5" stroke="rgba(204,204,220,0.08)" stroke-width="1"/><line x1="658.2" x2="1265.8000000000002" y1="625.5" y2="625.5" stroke="rgba(204,204,220,0.08)" stroke-width="1"/><rect x="658.4000000000001" y="615.6" width="10.8" height="3" rx="1.5" fill="#73BF69"/><text x="674.75" y="619.8" font-size="9.7" fill="#ccccdc" stroke="#ccccdc" stroke-width="0.25">Humidity</text><text x="1160" y="619.8" text-anchor="end" font-size="9.7" fill="#ccccdc" stroke="#ccccdc" stroke-width="0.25">64.4%</text><text x="1213" y="619.8" text-anchor="end" font-size="9.7" fill="#ccccdc" stroke="#ccccdc" stroke-width="0.25">72.1%</text><text x="1260" y="619.8" text-anchor="end" font-size="9.7" fill="#ccccdc" stroke="#ccccdc" stroke-width="0.25">78.1%</text><text x="1309" y="603.1" font-size="9.6" font-weight="bold" fill="#6e9fff">Name</text><text x="1794" y="603.1" text-anchor="end" font-size="9.6" font-weight="bold" fill="#6e9fff">Min</text><text x="1847" y="603.1" text-anchor="end" font-size="9.6" font-weight="bold" fill="#6e9fff">Mean</text><text x="1894" y="603.1" text-anchor="end" font-size="9.6" font-weight="bold" fill="#6e9fff">Max</text><line x1="1284" x2="1901.5" y1="608.5" y2="608.5" stroke="rgba(204,204,220,0.08)" stroke-width="1"/><line x1="1292" x2="1901.5" y1="625.5" y2="625.5" stroke="rgba(204,204,220,0.08)" stroke-width="1"/><rect x="1292.2" y="615.6" width="10.8" height="3" rx="1.5" fill="#73BF69"/><text x="1309" y="619.8" font-size="9.7" fill="#ccccdc" stroke="#ccccdc" stroke-width="0.25">Water Temperature</text><text x="1794" y="619.8" text-anchor="end" font-size="9.7" fill="#ccccdc" stroke="#ccccdc" stroke-width="0.25">19.2 °C</text><text x="1847" y="619.8" text-anchor="end" font-size="9.7" fill="#ccccdc" stroke="#ccccdc" stroke-width="0.25">19.5 °C</text><text x="1894" y="619.8" text-anchor="end" font-size="9.7" fill="#ccccdc" stroke="#ccccdc" stroke-width="0.25">19.9 °C</text><line x1="300.5" x2="1607.5" y1="813.20" y2="813.20" stroke="rgba(240,250,255,0.07)" stroke-width="1"/><text x="295.8" y="816.40" text-anchor="end" font-size="9.6" fill="#c7c8d2" stroke="#c7c8d2" stroke-width="0.25">0.00 W</text><line x1="300.5" x2="1607.5" y1="788.85" y2="788.85" stroke="rgba(240,250,255,0.07)" stroke-width="1"/><text x="295.8" y="792.05" text-anchor="end" font-size="9.6" fill="#c7c8d2" stroke="#c7c8d2" stroke-width="0.25">10.00 W</text><line x1="300.5" x2="1607.5" y1="764.50" y2="764.50" stroke="rgba(240,250,255,0.07)" stroke-width="1"/><text x="295.8" y="767.70" text-anchor="end" font-size="9.6" fill="#c7c8d2" stroke="#c7c8d2" stroke-width="0.25">20.00 W</text><line x1="300.5" x2="1607.5" y1="740.15" y2="740.15" stroke="rgba(240,250,255,0.07)" stroke-width="1"/><text x="295.8" y="743.35" text-anchor="end" font-size="9.6" fill="#c7c8d2" stroke="#c7c8d2" stroke-width="0.25">30.00 W</text><line x1="300.5" x2="1607.5" y1="715.80" y2="715.80" stroke="rgba(240,250,255,0.07)" stroke-width="1"/><text x="295.8" y="719.00" text-anchor="end" font-size="9.6" fill="#c7c8d2" stroke="#c7c8d2" stroke-width="0.25">40.00 W</text><text x="1611.7" y="816.40" font-size="9.6" fill="#c7c8d2" stroke="#c7c8d2" stroke-width="0.25">0.00 W</text><text x="1611.7" y="787.47" font-size="9.6" fill="#c7c8d2" stroke="#c7c8d2" stroke-width="0.25">500.00 mW</text><text x="1611.7" y="758.53" font-size="9.6" fill="#c7c8d2" stroke="#c7c8d2" stroke-width="0.25">1.00 W</text><text x="1611.7" y="729.60" font-size="9.6" fill="#c7c8d2" stroke="#c7c8d2" stroke-width="0.25">1.50 W</text><line x1="300.50" x2="300.50" y1="700" y2="813.2" stroke="rgba(240,250,255,0.07)" stroke-width="1"/><text x="300.50" y="827.6" text-anchor="middle" font-size="9.8" fill="#c7c8d2" stroke="#c7c8d2" stroke-width="0.25">02:00</text><line x1="356.43" x2="356.43" y1="700" y2="813.2" stroke="rgba(240,250,255,0.07)" stroke-width="1"/><text x="356.43" y="827.6" text-anchor="middle" font-size="9.8" fill="#c7c8d2" stroke="#c7c8d2" stroke-width="0.25">03:00</text><line x1="412.36" x2="412.36" y1="700" y2="813.2" stroke="rgba(240,250,255,0.07)" stroke-width="1"/><text x="412.36" y="827.6" text-anchor="middle" font-size="9.8" fill="#c7c8d2" stroke="#c7c8d2" stroke-width="0.25">04:00</text><line x1="468.29" x2="468.29" y1="700" y2="813.2" stroke="rgba(240,250,255,0.07)" stroke-width="1"/><text x="468.29" y="827.6" text-anchor="middle" font-size="9.8" fill="#c7c8d2" stroke="#c7c8d2" stroke-width="0.25">05:00</text><line x1="524.22" x2="524.22" y1="700" y2="813.2" stroke="rgba(240,250,255,0.07)" stroke-width="1"/><text x="524.22" y="827.6" text-anchor="middle" font-size="9.8" fill="#c7c8d2" stroke="#c7c8d2" stroke-width="0.25">06:00</text><line x1="580.15" x2="580.15" y1="700" y2="813.2" stroke="rgba(240,250,255,0.07)" stroke-width="1"/><text x="580.15" y="827.6" text-anchor="middle" font-size="9.8" fill="#c7c8d2" stroke="#c7c8d2" stroke-width="0.25">07:00</text><line x1="636.08" x2="636.08" y1="700" y2="813.2" stroke="rgba(240,250,255,0.07)" stroke-width="1"/><text x="636.08" y="827.6" text-anchor="middle" font-size="9.8" fill="#c7c8d2" stroke="#c7c8d2" stroke-width="0.25">08:00</text><line x1="692.01" x2="692.01" y1="700" y2="813.2" stroke="rgba(240,250,255,0.07)" stroke-width="1"/><text x="692.01" y="827.6" text-anchor="middle" font-size="9.8" fill="#c7c8d2" stroke="#c7c8d2" stroke-width="0.25">09:00</text><line x1="747.94" x2="747.94" y1="700" y2="813.2" stroke="rgba(240,250,255,0.07)" stroke-width="1"/><text x="747.94" y="827.6" text-anchor="middle" font-size="9.8" fill="#c7c8d2" stroke="#c7c8d2" stroke-width="0.25">10:00</text><line x1="803.87" x2="803.87" y1="700" y2="813.2" stroke="rgba(240,250,255,0.07)" stroke-width="1"/><text x="803.87" y="827.6" text-anchor="middle" font-size="9.8" fill="#c7c8d2" stroke="#c7c8d2" stroke-width="0.25">11:00</text><line x1="859.80" x2="859.80" y1="700" y2="813.2" stroke="rgba(240,250,255,0.07)" stroke-width="1"/><text x="859.80" y="827.6" text-anchor="middle" font-size="9.8" fill="#c7c8d2" stroke="#c7c8d2" stroke-width="0.25">12:00</text><line x1="915.73" x2="915.73" y1="700" y2="813.2" stroke="rgba(240,250,255,0.07)" stroke-width="1"/><text x="915.73" y="827.6" text-anchor="middle" font-size="9.8" fill="#c7c8d2" stroke="#c7c8d2" stroke-width="0.25">13:00</text><line x1="971.66" x2="971.66" y1="700" y2="813.2" stroke="rgba(240,250,255,0.07)" stroke-width="1"/><text x="971.66" y="827.6" text-anchor="middle" font-size="9.8" fill="#c7c8d2" stroke="#c7c8d2" stroke-width="0.25">14:00</text><line x1="1027.59" x2="1027.59" y1="700" y2="813.2" stroke="rgba(240,250,255,0.07)" stroke-width="1"/><text x="1027.59" y="827.6" text-anchor="middle" font-size="9.8" fill="#c7c8d2" stroke="#c7c8d2" stroke-width="0.25">15:00</text><line x1="1083.52" x2="1083.52" y1="700" y2="813.2" stroke="rgba(240,250,255,0.07)" stroke-width="1"/><text x="1083.52" y="827.6" text-anchor="middle" font-size="9.8" fill="#c7c8d2" stroke="#c7c8d2" stroke-width="0.25">16:00</text><line x1="1139.45" x2="1139.45" y1="700" y2="813.2" stroke="rgba(240,250,255,0.07)" stroke-width="1"/><text x="1139.45" y="827.6" text-anchor="middle" font-size="9.8" fill="#c7c8d2" stroke="#c7c8d2" stroke-width="0.25">17:00</text><line x1="1195.38" x2="1195.38" y1="700" y2="813.2" stroke="rgba(240,250,255,0.07)" stroke-width="1"/><text x="1195.38" y="827.6" text-anchor="middle" font-size="9.8" fill="#c7c8d2" stroke="#c7c8d2" stroke-width="0.25">18:00</text><line x1="1251.31" x2="1251.31" y1="700" y2="813.2" stroke="rgba(240,250,255,0.07)" stroke-width="1"/><text x="1251.31" y="827.6" text-anchor="middle" font-size="9.8" fill="#c7c8d2" stroke="#c7c8d2" stroke-width="0.25">19:00</text><line x1="1307.24" x2="1307.24" y1="700" y2="813.2" stroke="rgba(240,250,255,0.07)" stroke-width="1"/><text x="1307.24" y="827.6" text-anchor="middle" font-size="9.8" fill="#c7c8d2" stroke="#c7c8d2" stroke-width="0.25">20:00</text><line x1="1363.17" x2="1363.17" y1="700" y2="813.2" stroke="rgba(240,250,255,0.07)" stroke-width="1"/><text x="1363.17" y="827.6" text-anchor="middle" font-size="9.8" fill="#c7c8d2" stroke="#c7c8d2" stroke-width="0.25">21:00</text><line x1="1419.10" x2="1419.10" y1="700" y2="813.2" stroke="rgba(240,250,255,0.07)" stroke-width="1"/><text x="1419.10" y="827.6" text-anchor="middle" font-size="9.8" fill="#c7c8d2" stroke="#c7c8d2" stroke-width="0.25">22:00</text><line x1="1475.03" x2="1475.03" y1="700" y2="813.2" stroke="rgba(240,250,255,0.07)" stroke-width="1"/><text x="1475.03" y="827.6" text-anchor="middle" font-size="9.8" fill="#c7c8d2" stroke="#c7c8d2" stroke-width="0.25">23:00</text><line x1="1530.96" x2="1530.96" y1="700" y2="813.2" stroke="rgba(240,250,255,0.07)" stroke-width="1"/><text x="1530.96" y="827.6" text-anchor="middle" font-size="9.8" fill="#c7c8d2" stroke="#c7c8d2" stroke-width="0.25">00:00</text><line x1="1586.89" x2="1586.89" y1="700" y2="813.2" stroke="rgba(240,250,255,0.07)" stroke-width="1"/><text x="1586.89" y="827.6" text-anchor="middle" font-size="9.8" fill="#c7c8d2" stroke="#c7c8d2" stroke-width="0.25">01:00</text><svg x="300.5" y="690" width="1307.0" height="130" viewBox="300.5 690 1307.0 130" overflow="hidden"><path d="M300.50,813.50 L356.70,813.50 L370.70,713.90 L374.70,715.30 L414.50,715.70 L530.00,715.90 L832.00,715.70 L835.00,717.00 L1322.00,717.00 L1333.20,715.70 L1363.80,715.70 L1377.70,813.50 L1607.50,813.50" fill="none" stroke="#FADE2A" stroke-width="1.9" stroke-linejoin="round" stroke-linecap="round" /><path d="M300.31,813.50 L357.39,813.50 L364.03,812.57 L374.65,812.84 L376.64,813.90 L380.00,813.59 L385.73,813.59 L387.29,806.30 L392.50,805.52 L393.54,799.53 L399.27,799.53 L401.35,806.56 L402.92,806.56 L404.48,799.53 L407.08,799.79 L408.65,806.04 L409.95,797.71 L414.38,797.19 L415.42,791.72 L416.46,795.62 L421.67,795.89 L422.45,791.20 L423.49,795.62 L429.48,796.67 L430.26,799.27 L435.21,799.27 L435.99,795.10 L437.81,796.93 L441.98,796.67 L442.76,790.68 L444.06,796.67 L448.75,796.67 L449.53,789.38 L450.57,797.45 L455.00,797.71 L456.82,806.04 L458.12,805.52 L459.43,797.97 L462.29,797.97 L463.85,805.52 L468.54,805.52 L470.10,797.97 L471.67,797.71 L473.23,805.00 L476.35,805.00 L477.92,799.27 L480.00,799.01 L476.56,799.79 L481.77,799.01 L483.59,806.82 L489.58,806.82 L490.89,810.73 L491.93,806.56 L497.40,806.30 L498.70,797.97 L504.69,797.45 L506.25,799.27 L511.98,799.53 L513.54,802.14 L519.27,802.40 L520.57,800.05 L525.00,799.79 L526.30,805.00 L527.34,797.97 L531.77,797.19 L533.33,798.75 L539.06,799.01 L540.62,801.35 L542.19,798.75 L546.35,799.27 L547.66,803.96 L548.96,797.97 L553.65,797.97 L555.21,801.88 L556.25,798.23 L560.94,798.75 L563.02,806.30 L566.67,806.30 L567.71,801.09 L569.27,801.61 L570.83,807.08 L575.00,807.08 L574.17,807.08 L575.73,800.57 L579.90,800.83 L580.94,806.04 L582.50,799.79 L588.75,799.01 L590.83,805.00 L593.96,805.52 L595.52,799.01 L597.60,805.00 L599.69,806.56 L601.25,800.57 L607.50,800.57 L608.80,806.30 L614.27,806.56 L615.57,799.27 L617.40,803.96 L627.29,803.96 L628.85,811.25 L631.98,813.33 L648.12,813.33 L649.17,812.55 L658.54,811.77 L670.00,812.55 L670.71,813.50 L686.64,813.50 L687.97,806.86 L700.58,807.53 L702.57,813.50 L704.57,807.53 L711.20,807.53 L712.53,799.56 L715.85,798.90 L717.18,792.26 L718.50,798.23 L723.81,798.23 L725.14,792.92 L726.47,798.90 L729.12,794.25 L731.78,802.22 L734.43,795.58 L741.07,792.92 L743.73,788.28 L746.38,787.61 L748.37,783.63 L753.02,766.37 L755.67,750.44 L759.66,734.51 L763.64,721.90 L767.62,721.90 L765.00,721.24 L771.64,723.89 L778.27,721.24 L788.89,718.58 L799.51,719.25 L800.84,723.23 L814.12,723.23 L815.44,719.25 L819.43,721.24 L827.39,726.55 L832.70,731.86 L833.20,733.27 L834.70,738.64 L836.20,733.61 L837.70,738.98 L839.20,733.95 L840.70,739.32 L842.20,734.29 L843.70,739.66 L845.20,734.85 L846.70,740.80 L848.20,736.35 L849.70,742.30 L851.20,737.85 L852.70,743.80 L854.20,739.35 L855.70,745.30 L857.20,740.85 L858.70,746.41 L860.20,741.21 L861.70,746.41 L863.20,741.21 L864.70,746.41 L865.89,743.14 L868.54,753.10 L873.85,776.99 L880.49,792.92 L885.80,774.34 L889.12,762.39 L889.10,762.40 L890.80,774.00 L892.50,762.09 L894.20,773.39 L895.90,761.78 L897.60,772.79 L899.30,761.47 L901.00,772.18 L902.70,761.16 L904.40,771.58 L906.10,760.85 L907.80,770.97 L909.50,760.54 L911.20,770.38 L912.90,760.47 L914.60,770.08 L916.30,760.60 L918.00,769.79 L919.70,760.73 L921.40,769.49 L923.10,760.85 L924.80,769.19 L926.50,760.98 L928.20,769.31 L929.90,760.76 L931.60,770.17 L933.30,760.49 L935.00,771.04 L936.70,760.21 L938.40,771.70 L940.10,759.94 L941.80,771.70 L943.50,759.66 L945.20,771.70 L946.90,759.38 L948.60,771.70 L950.30,759.11 L952.00,771.70 L953.70,758.83 L955.40,770.08 L957.10,758.55 L958.80,767.17 L960.50,758.32 L962.20,766.65 L963.90,758.15 L965.60,766.28 L967.30,757.98 L969.00,765.91 L970.70,757.81 L972.40,765.54 L974.10,757.92 L975.80,765.17 L977.50,758.05 L979.20,764.75 L980.90,758.18 L982.60,764.27 L984.30,758.31 L986.00,763.78 L987.70,758.44 L989.40,763.30 L991.10,758.57 L992.80,762.82 L994.50,758.70 L996.20,762.34 L997.90,758.83 L999.60,761.86 L1001.30,758.96 L1003.00,761.38 L1004.70,759.09 L1005.00,758.05 L1006.70,763.34 L1008.40,758.22 L1010.10,763.51 L1011.80,758.39 L1013.50,763.69 L1015.20,758.68 L1016.90,764.07 L1018.60,759.06 L1020.30,764.45 L1022.00,759.43 L1023.70,764.82 L1025.40,759.81 L1027.10,765.20 L1028.80,760.19 L1030.50,765.58 L1032.20,760.57 L1033.90,765.96 L1035.60,760.95 L1037.30,766.30 L1039.00,760.89 L1040.70,765.88 L1042.40,760.47 L1044.10,765.45 L1045.80,760.04 L1047.50,765.03 L1049.20,759.62 L1050.90,764.60 L1052.60,759.19 L1054.30,764.45 L1056.00,759.42 L1057.70,764.79 L1059.40,759.76 L1061.10,765.13 L1062.80,760.10 L1064.50,765.47 L1066.20,760.44 L1067.90,766.18 L1069.60,761.57 L1071.30,767.36 L1073.00,762.75 L1074.70,768.54 L1076.40,763.93 L1078.10,769.71 L1079.80,765.10 L1081.50,770.89 L1083.20,766.28 L1084.90,771.48 L1086.60,766.08 L1088.30,771.08 L1090.00,765.68 L1091.70,770.68 L1093.40,765.28 L1095.10,770.28 L1096.80,764.88 L1098.50,769.88 L1100.20,764.48 L1101.90,769.48 L1103.60,764.08 L1105.30,769.08 L1107.00,763.73 L1108.70,768.85 L1110.40,763.56 L1112.10,768.68 L1113.80,763.39 L1115.50,768.51 L1117.20,763.22 L1118.90,768.34 L1120.60,762.94 L1122.30,767.89 L1124.00,762.43 L1125.70,767.38 L1127.40,761.92 L1129.10,766.87 L1130.80,761.41 L1132.50,766.36 L1134.20,761.02 L1135.90,766.11 L1137.60,760.80 L1139.30,765.88 L1141.00,760.57 L1142.70,765.66 L1144.40,760.34 L1146.10,765.43 L1147.80,760.12 L1149.50,765.20 L1151.20,759.89 L1152.90,764.94 L1154.60,759.40 L1156.30,764.26 L1158.00,758.72 L1159.70,763.58 L1161.40,758.04 L1163.10,762.90 L1164.80,757.36 L1166.50,762.39 L1168.20,757.36 L1169.90,762.73 L1171.60,757.70 L1183.19,765.05 L1209.74,765.71 L1215.05,764.38 L1227.00,764.38 L1228.33,762.39 L1240.01,763.06 L1240.00,760.43 L1241.60,765.20 L1243.20,762.20 L1244.80,767.20 L1246.40,763.69 L1248.00,767.64 L1249.60,763.59 L1251.20,767.55 L1252.80,763.50 L1254.40,767.45 L1256.00,763.41 L1257.60,767.36 L1259.20,763.31 L1260.80,767.26 L1262.40,763.22 L1264.00,767.17 L1265.60,763.12 L1267.20,767.08 L1268.80,763.09 L1270.40,767.19 L1272.00,763.30 L1273.60,767.41 L1275.20,763.51 L1276.80,767.62 L1278.40,763.73 L1280.00,767.83 L1281.60,763.94 L1283.20,768.05 L1284.80,764.15 L1286.40,768.26 L1288.00,764.37 L1289.60,768.52 L1291.20,764.68 L1292.80,768.84 L1294.40,765.00 L1296.00,769.16 L1297.60,765.32 L1299.20,769.48 L1300.80,765.64 L1302.40,769.77 L1304.00,765.88 L1305.60,769.98 L1307.20,766.09 L1308.80,770.20 L1310.40,766.30 L1312.00,770.41 L1313.60,766.52 L1315.20,770.62 L1316.80,766.73 L1318.40,770.84 L1320.00,766.94 L1321.60,770.89 L1323.20,766.18 L1324.80,769.47 L1326.40,764.76 L1328.00,768.05 L1329.60,763.33 L1331.20,766.62 L1332.80,761.91 L1334.40,766.62 L1336.00,763.86 L1337.60,769.09 L1339.20,766.33 L1340.80,771.57 L1342.40,768.80 L1344.00,774.04 L1345.60,771.27 L1347.20,776.51 L1348.80,772.39 L1350.40,775.37 L1352.00,770.35 L1353.60,773.34 L1355.20,768.32 L1356.80,771.30 L1358.40,766.28 L1360.00,769.26 L1361.60,764.24 L1366.42,771.68 L1367.75,779.65 L1378.37,812.84 L1498.60,813.20 L1503.50,810.00 L1507.00,810.60 L1510.00,810.20 L1514.00,811.20 L1516.50,813.20 L1607.50,813.20" fill="none" stroke="#5794F2" stroke-width="1.8" stroke-linejoin="round" stroke-linecap="round" /><line x1="1380" x2="1607.5" y1="813.2" y2="813.2" stroke="#e8e4b0" stroke-opacity="0.75" stroke-width="1.8" stroke-dasharray="14 15"/></svg><text x="279" y="841.9" font-size="9.6" font-weight="bold" fill="#6e9fff">Name</text><text x="1547.2" y="841.9" text-anchor="end" font-size="9.6" font-weight="bold" fill="#6e9fff">Min</text><text x="1600.3" y="841.9" text-anchor="end" font-size="9.6" font-weight="bold" fill="#6e9fff">Mean</text><text x="1656.9" y="841.9" text-anchor="end" font-size="9.6" font-weight="bold" fill="#6e9fff">Max</text><line x1="256" x2="1662.5" y1="847.2" y2="847.2" stroke="rgba(204,204,220,0.08)" stroke-width="1"/><line x1="256" x2="1662.5" y1="865" y2="865" stroke="rgba(204,204,220,0.08)" stroke-width="1"/><line x1="256" x2="1662.5" y1="882.5" y2="882.5" stroke="rgba(204,204,220,0.08)" stroke-width="1"/><rect x="262.2" y="854.5" width="10.8" height="3" rx="1.5" fill="#FADE2A"/><rect x="262.2" y="872.1" width="10.8" height="3" rx="1.5" fill="#5794F2"/><text x="279" y="859.7" font-size="9.7" fill="#ccccdc" stroke="#ccccdc" stroke-width="0.25">Light</text><text x="279" y="877.2" font-size="9.7" fill="#ccccdc" stroke="#ccccdc" stroke-width="0.25">Fan <tspan fill="#8e8f99" stroke="#8e8f99">(right y-axis)</tspan></text><text x="1547.2" y="859.2" text-anchor="end" font-size="9.7" fill="#ccccdc" stroke="#ccccdc" stroke-width="0.25">0.00 W</text><text x="1609.6" y="859.2" text-anchor="end" font-size="9.7" fill="#ccccdc" stroke="#ccccdc" stroke-width="0.25">30.74 W</text><text x="1656.9" y="859.2" text-anchor="end" font-size="9.7" fill="#ccccdc" stroke="#ccccdc" stroke-width="0.25">40.81 W</text><text x="1547.2" y="876.7" text-anchor="end" font-size="9.7" fill="#ccccdc" stroke="#ccccdc" stroke-width="0.25">0.00 W</text><text x="1609.6" y="876.7" text-anchor="end" font-size="9.7" fill="#ccccdc" stroke="#ccccdc" stroke-width="0.25">504.90 mW</text><text x="1656.9" y="876.7" text-anchor="end" font-size="9.7" fill="#ccccdc" stroke="#ccccdc" stroke-width="0.25">1.65 W</text></svg></body></html>
